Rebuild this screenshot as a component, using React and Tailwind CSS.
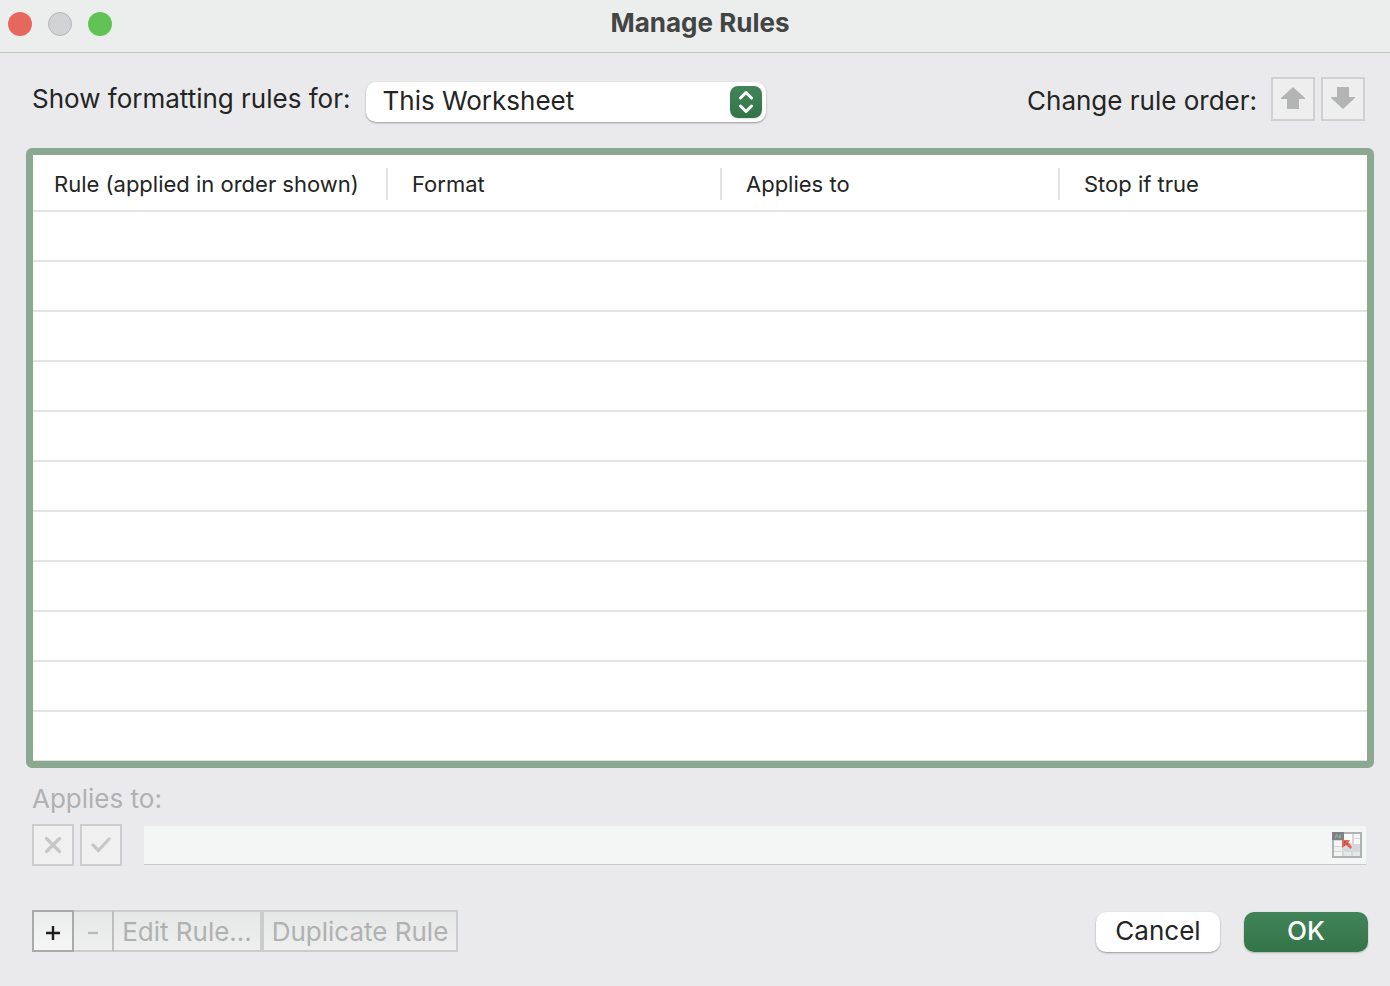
import React from 'react';

// --- Static Data Definitions ---
const columns = [
    { title: 'Rule (applied in order shown)', width: 'w-[355px]', padding: 'pl-[21px]' },
    { title: 'Format', width: 'w-[334px]', padding: 'pl-6' },
    { title: 'Applies to', width: 'w-[338px]', padding: 'pl-6' },
    { title: 'Stop if true', width: '', padding: 'pl-6' },
];

const EMPTY_ROWS = 11;

const scopes = ['This Worksheet', 'Current Selection', 'This Table'];

// --- Icons ---
const ArrowUp = ({ className }) => (
    <svg width="24" height="22" viewBox="0 0 24 22" className={className} aria-hidden="true">
        <path d="M12 0 L24 11 V12 H18 V22 H6 V12 H0 V11 Z" fill="#b3b5b4" />
    </svg>
);

const ChevronUpDown = () => (
    <svg width="32" height="32" viewBox="0 0 32 32" fill="none" stroke="#fff" strokeWidth="3" strokeLinecap="round" strokeLinejoin="round" aria-hidden="true">
        <path d="M10.5 12 L16 6.5 L21.5 12" />
        <path d="M10.5 20 L16 25.5 L21.5 20" />
    </svg>
);

const CrossIcon = () => (
    <svg width="18" height="18" viewBox="0 0 18 18" fill="none" stroke="#c6c7c7" strokeWidth="3.2" strokeLinecap="round" aria-hidden="true">
        <path d="M2.5 2.5 L15.5 15.5 M15.5 2.5 L2.5 15.5" />
    </svg>
);

const CheckIcon = () => (
    <svg width="20" height="18" viewBox="0 0 20 18" fill="none" stroke="#c6c7c7" strokeWidth="3.2" strokeLinecap="round" aria-hidden="true">
        <path d="M2 9 L7.5 14.5 L18 3" />
    </svg>
);

const PlusIcon = () => (
    <svg width="16" height="16" viewBox="0 0 16 16" stroke="#1f1f1f" strokeWidth="2.4" aria-hidden="true">
        <path d="M8 1 V15 M1 8 H15" />
    </svg>
);

const MinusIcon = () => (
    <svg width="10" height="4" viewBox="0 0 10 4" stroke="#b9baba" strokeWidth="2.4" aria-hidden="true">
        <path d="M0 2 H10" />
    </svg>
);

const RangePickerIcon = () => (
    <svg width="30" height="26" viewBox="0 0 30 26" aria-hidden="true">
        <rect width="30" height="26" fill="#aeb2b1" />
        <rect x="2" y="2" width="26" height="22" fill="#d6d8da" />
        <rect x="2" y="9" width="8" height="5" fill="#f6f6f8" />
        <rect x="2" y="15" width="8" height="4" fill="#f0f0f3" />
        <rect x="2" y="20" width="8" height="4" fill="#f4f4f6" />
        <rect x="12" y="2" width="8" height="9" fill="#fbfbfc" />
        <rect x="22" y="2" width="6" height="4" fill="#f6f6f8" />
        <rect x="22" y="7" width="6" height="5" fill="#fbfbfc" />
        <rect x="12" y="20" width="7" height="4" fill="#e6e7e9" />
        <rect x="21" y="20" width="7" height="4" fill="#e6e7e9" />
        <rect width="12" height="8" fill="#7d8382" />
        <path d="M3 6 L4.5 2.5 L6 6 M7 2.5 L9 6 M9 2.5 L7 6" stroke="#a3b3a9" strokeWidth="0.8" fill="none" />
        <path d="M10 8 H18 L16.5 10.5 L20 15 L18.5 17 L14 13 L10 16 Z" fill="#e4665b" />
        <path d="M12 10 H14 M14 12 H16 M12 13 H13" stroke="#9d322b" strokeWidth="1" />
    </svg>
);

// --- Title Bar ---
const TitleBar = ({ title }) => (
    <header className="grid h-[53px] grid-cols-[1fr_auto_1fr] items-start border-b border-[#c3c5c4] bg-[#eceeed] px-2">
        <div className="flex gap-4 pt-3">
            <button aria-label="Close" className="size-6 rounded-full bg-[#e6685c]" />
            <button aria-label="Minimize" className="size-6 rounded-full border border-[#b4b5b7] bg-[#d2d3d5]" disabled />
            <button aria-label="Zoom" className="size-6 rounded-full bg-[#61c354]" />
        </div>
        <h1 className="pt-[7px] pl-2.5 text-[26px] leading-8 font-bold text-[#434544]">{title}</h1>
    </header>
);

// --- Rules Table ---
const RulesTable = () => (
    <div className="mr-4 ml-[26px] rounded-md border-7 border-[#8ba890] bg-white">
        <table className="w-full table-fixed border-separate border-spacing-0 text-left">
            <thead>
                <tr>
                    {columns.map((column, index) => (
                        <th key={column.title} scope="col" className={`h-[57px] border-b-2 border-[#e4e4e4] p-0 pt-0.5 font-normal ${column.width}`}>
                            <div className={`flex h-8 items-center text-[22px] whitespace-nowrap ${column.padding} ${index < columns.length - 1 ? 'border-r-2 border-[#e2e2e2]' : ''}`}>
                                {column.title}
                            </div>
                        </th>
                    ))}
                </tr>
            </thead>
            <tbody>
                {Array.from({ length: EMPTY_ROWS }, (_, row) => (
                    <tr key={row}>
                        <td colSpan={columns.length} className={row < EMPTY_ROWS - 1 ? 'h-[50px] border-b-2 border-[#e4e4e4] p-0' : 'h-[49px] border-b border-[#dfe3e0] p-0'} />
                    </tr>
                ))}
            </tbody>
        </table>
    </div>
);

const App = () => {
    const [scope, setScope] = React.useState(scopes[0]);
    const [range, setRange] = React.useState('');

    return (
        <main className="min-h-screen bg-[#eaeaec] font-['Inter','Liberation_Sans',sans-serif] text-[26px] leading-8 text-[#232424]">
            <TitleBar title="Manage Rules" />

            <div className="flex h-[95px] items-start justify-between pt-6 pr-[25px] pl-8">
                <div className="flex items-start gap-4">
                    <label htmlFor="scope" className="pt-1.5 whitespace-nowrap">Show formatting rules for:</label>
                    <div className="mt-[5px] grid w-[400px] items-center">
                        <select
                            id="scope"
                            value={scope}
                            onChange={(e) => setScope(e.target.value)}
                            className="col-start-1 row-start-1 h-10 w-full appearance-none rounded-[10px] bg-white pr-10 pb-0.5 pl-4 shadow-[0_1px_2px_rgba(0,0,0,0.35)]"
                        >
                            {scopes.map((name) => (
                                <option key={name}>{name}</option>
                            ))}
                        </select>
                        <span className="pointer-events-none col-start-1 row-start-1 mr-1 justify-self-end rounded-lg bg-linear-to-b from-[#428459] to-[#337448] shadow-sm">
                            <ChevronUpDown />
                        </span>
                    </div>
                </div>

                <div className="flex items-start gap-1.5">
                    <span className="pt-2 pr-2 whitespace-nowrap">Change rule order:</span>
                    <button aria-label="Move rule up" disabled className="flex size-11 items-center justify-center border-2 border-[#cfd0d1] bg-[#eeeeef] pb-0.5">
                        <ArrowUp />
                    </button>
                    <button aria-label="Move rule down" disabled className="flex size-11 items-center justify-center border-2 border-[#cfd0d1] bg-[#eeeeef] pb-0.5">
                        <ArrowUp className="rotate-180" />
                    </button>
                </div>
            </div>

            <RulesTable />

            <section className="pt-[15px] pr-6 pl-8">
                <label htmlFor="range" className="block text-[#b0b1b1]">Applies to:</label>
                <div className="mt-[9px] flex items-center">
                    <button aria-label="Discard range" disabled className="flex size-[42px] items-center justify-center border-2 border-[#cdcdce] bg-[#f0f0f1]">
                        <CrossIcon />
                    </button>
                    <button aria-label="Accept range" disabled className="ml-1.5 flex size-[42px] items-center justify-center border-2 border-[#cdcdce] bg-[#f0f0f1]">
                        <CheckIcon />
                    </button>
                    <div className="ml-[22px] flex h-[39px] flex-1 items-center border-b border-[#c8c9ca] bg-[#f4f5f5] pr-1">
                        <input
                            id="range"
                            type="text"
                            value={range}
                            onChange={(e) => setRange(e.target.value)}
                            disabled
                            className="h-full min-w-0 flex-1 bg-transparent px-2"
                        />
                        <button aria-label="Select range" disabled>
                            <RangePickerIcon />
                        </button>
                    </div>
                </div>
            </section>

            <footer className="flex items-start justify-between pt-11 pr-[22px] pb-8 pl-8">
                <div className="flex h-[42px] text-[#b0b1b1]">
                    <button aria-label="Add rule" className="flex w-[42px] items-center justify-center border-2 border-[#a9aaaa] bg-linear-to-b from-[#ebecec] to-[#f6f6f6] pt-1">
                        <PlusIcon />
                    </button>
                    <button aria-label="Delete rule" disabled className="flex w-10 items-center justify-center border-y-2 border-r-2 border-[#cbcccc] border-r-[#bdbebe] bg-linear-to-b from-[#e6e7e7] to-[#efeff0] pt-1">
                        <MinusIcon />
                    </button>
                    <button disabled className="w-[148px] border-y-2 border-r-2 border-[#cbcccc] bg-linear-to-b from-[#e6e7e7] to-[#efeff0] pt-0.5 whitespace-nowrap">
                        Edit Rule...
                    </button>
                    <button disabled className="w-[196px] border-2 border-[#cbcccc] bg-linear-to-b from-[#e6e7e7] to-[#efeff0] pt-0.5 whitespace-nowrap">
                        Duplicate Rule
                    </button>
                </div>
                <div className="flex gap-6 pt-0.5">
                    <button className="h-10 w-[124px] rounded-[10px] bg-white pb-0.5 shadow-[0_1px_2px_rgba(0,0,0,0.35)]">Cancel</button>
                    <button className="h-10 w-[124px] rounded-[10px] bg-linear-to-b from-[#428459] to-[#337448] pb-0.5 font-medium text-white shadow-[0_1px_2px_rgba(0,0,0,0.25)]">OK</button>
                </div>
            </footer>
        </main>
    );
};

export default App;
